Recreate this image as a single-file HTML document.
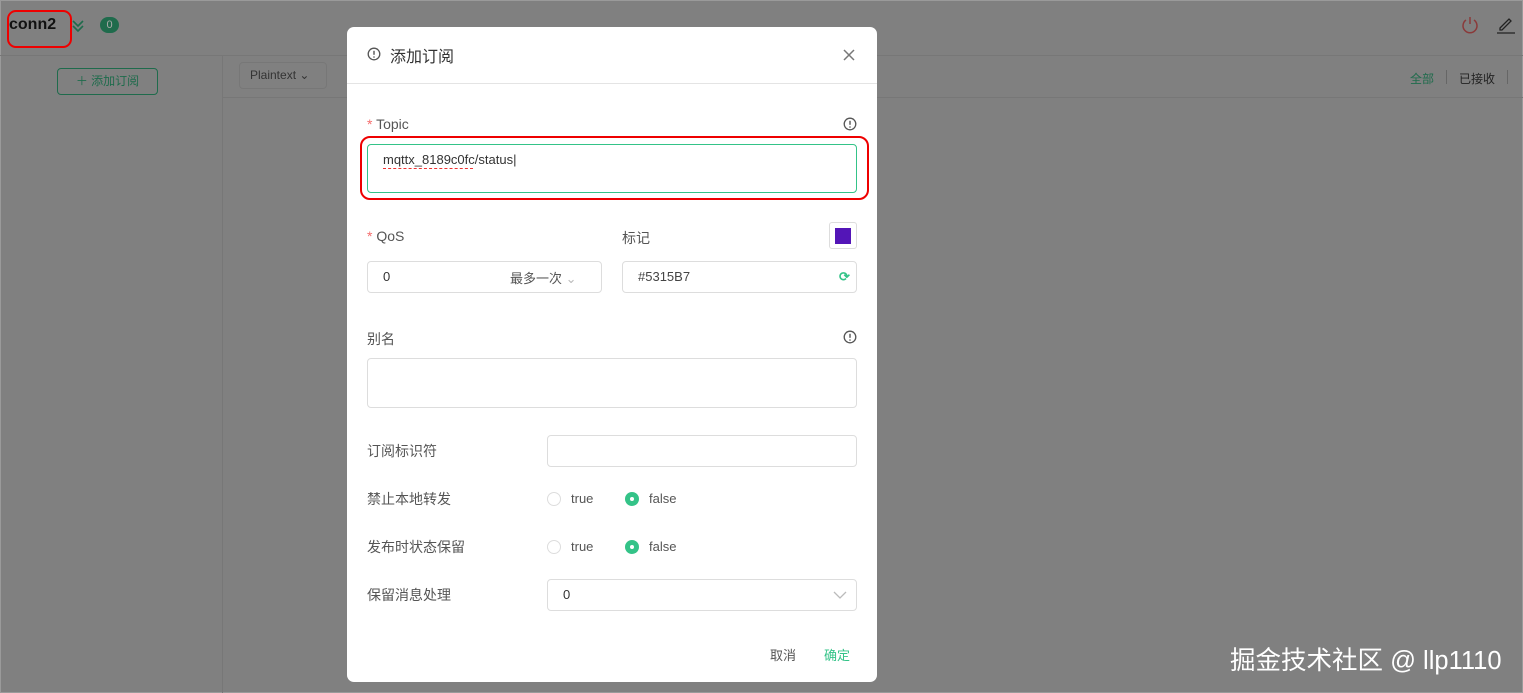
<!DOCTYPE html>
<html><head><meta charset="utf-8"><style>
*{margin:0;padding:0;box-sizing:border-box}
body{width:1523px;height:693px;background:#808080;position:relative;overflow:hidden;font-family:"Liberation Sans","Noto Sans CJK SC",sans-serif;color:#333}
.a{position:absolute}
.lbl{font-size:14px;color:#555}
.inp{position:absolute;background:#fff;border:1px solid #ddd;border-radius:4px}
.radio{position:absolute;width:14px;height:14px;border-radius:50%;border:1px solid #ddd;background:#fff}
.radio.on{border:none;background:#34c388}
.radio.on::after{content:"";position:absolute;left:5px;top:5px;width:4px;height:4px;border-radius:50%;background:#fff}
.rt{position:absolute;font-size:13px;color:#555}
</style></head><body>
<div class="a" style="left:0;top:0;width:1523px;height:693px;border:1px solid #9a9a9a"></div>
<div class="a" style="left:0;top:55px;width:1523px;height:1px;background:#777"></div>
<div class="a" style="left:222px;top:56px;width:1px;height:637px;background:#777"></div>
<div class="a" style="left:222px;top:97px;width:1301px;height:1px;background:#777"></div>
<div class="a" style="left:9px;top:16px;font-size:16px;font-weight:bold;color:#111">conn2</div>
<div class="a" style="left:7px;top:10px;width:65px;height:38px;border:2px solid #e00;border-radius:9px"></div>
<svg class="a" style="left:71px;top:19px" width="14" height="14"><path d="M2 2l5 5 5-5M2 7l5 5 5-5" stroke="#1f6b4c" stroke-width="1.6" fill="none"/></svg>
<div class="a" style="left:100px;top:17px;width:19px;height:16px;border-radius:8px;background:#1f6b4c;color:#aaa;font-size:11px;text-align:center;line-height:16px">0</div>
<div class="a" style="left:57px;top:68px;width:101px;height:27px;border:1px solid #1f6b4c;border-radius:4px;color:#1f6b4c;font-size:12px;line-height:25px;text-align:center">＋ 添加订阅</div>
<div class="a" style="left:239px;top:62px;width:88px;height:27px;border:1px solid #777;border-radius:4px;color:#333;font-size:12px;line-height:25px;padding-left:10px">Plaintext ⌄</div>
<svg class="a" style="left:1460px;top:15px" width="20" height="20"><path d="M6 5a7 7 0 1 0 8 0" stroke="#8a3a3a" stroke-width="1.5" fill="none"/><path d="M10 2v7" stroke="#8a3a3a" stroke-width="1.5"/></svg>
<svg class="a" style="left:1496px;top:14px" width="20" height="20"><path d="M4 14l9-9 2 2-9 9H4z" stroke="#222" stroke-width="1.3" fill="none"/><path d="M1 19h18" stroke="#222" stroke-width="1.3"/></svg>
<div class="a" style="left:1410px;top:70px;font-size:12px;color:#1f6b4c">全部</div>
<div class="a" style="left:1446px;top:70px;width:1px;height:14px;background:#666"></div>
<div class="a" style="left:1459px;top:70px;font-size:12px;color:#222">已接收</div>
<div class="a" style="left:1507px;top:70px;width:1px;height:14px;background:#666"></div>
<div class="a" style="left:1230px;top:640px;font-size:25.5px;color:#fff">掘金技术社区 @ llp1110</div>

<div class="a" style="left:347px;top:27px;width:530px;height:655px;background:#fff;border-radius:7px">
<svg class="a" style="left:20px;top:20px" width="14" height="14"><circle cx="7" cy="7" r="5.8" stroke="#555" stroke-width="1.3" fill="none"/><path d="M7 3.8v4" stroke="#555" stroke-width="1.4"/><circle cx="7" cy="10" r=".8" fill="#555"/></svg>
<div class="a" style="left:43px;top:16px;font-size:16px;color:#333">添加订阅</div>
<svg class="a" style="left:496px;top:22px" width="12" height="12"><path d="M1 1l10 10M11 1L1 11" stroke="#777" stroke-width="1.5"/></svg>
<div class="a" style="left:0;top:56px;width:530px;height:1px;background:#e4e4e4"></div>

<div class="a lbl" style="left:20px;top:89px"><span style="color:#f56c6c">*</span> Topic</div>
<svg class="a" style="left:496px;top:90px" width="14" height="14"><circle cx="7" cy="7" r="5.8" stroke="#555" stroke-width="1.3" fill="none"/><path d="M7 3.8v4" stroke="#555" stroke-width="1.4"/><circle cx="7" cy="10" r=".8" fill="#555"/></svg>
<div class="inp" style="left:20px;top:117px;width:490px;height:49px;border-color:#34c388"></div>
<div class="a" style="left:36px;top:125px;font-size:13px;color:#333">mqttx_8189c0fc/status|</div>
<div class="a" style="left:36px;top:140px;width:90px;height:2px;border-bottom:1px dashed #e33"></div>
<div class="a" style="left:13px;top:109px;width:509px;height:64px;border:2.5px solid #e00;border-radius:10px"></div>

<div class="a lbl" style="left:20px;top:201px"><span style="color:#f56c6c">*</span> QoS</div>
<div class="a lbl" style="left:275px;top:201px">标记</div>
<div class="a" style="left:482px;top:195px;width:28px;height:27px;border:1px solid #ddd;border-radius:3px"><div style="margin:5px;width:16px;height:16px;background:#5315B7"></div></div>
<div class="inp" style="left:20px;top:234px;width:235px;height:32px"></div>
<div class="a" style="left:36px;top:242px;font-size:13px">0</div>
<div class="a" style="left:163px;top:241px;font-size:13px;color:#555">最多一次 <span style="color:#bbb">⌄</span></div>
<div class="inp" style="left:275px;top:234px;width:235px;height:32px"></div>
<div class="a" style="left:291px;top:242px;font-size:13px;color:#444">#5315B7</div>
<div class="a" style="left:492px;top:242px;font-size:13px;color:#34c388;font-weight:bold">⟳</div>

<div class="a lbl" style="left:20px;top:302px">别名</div>
<svg class="a" style="left:496px;top:303px" width="14" height="14"><circle cx="7" cy="7" r="5.8" stroke="#555" stroke-width="1.3" fill="none"/><path d="M7 3.8v4" stroke="#555" stroke-width="1.4"/><circle cx="7" cy="10" r=".8" fill="#555"/></svg>
<div class="inp" style="left:20px;top:331px;width:490px;height:50px"></div>

<div class="a lbl" style="left:20px;top:414px">订阅标识符</div>
<div class="inp" style="left:200px;top:408px;width:310px;height:32px"></div>
<div class="a lbl" style="left:20px;top:462px">禁止本地转发</div>
<div class="radio" style="left:200px;top:465px"></div><div class="rt" style="left:224px;top:464px">true</div>
<div class="radio on" style="left:278px;top:465px"></div><div class="rt" style="left:302px;top:464px">false</div>
<div class="a lbl" style="left:20px;top:510px">发布时状态保留</div>
<div class="radio" style="left:200px;top:513px"></div><div class="rt" style="left:224px;top:512px">true</div>
<div class="radio on" style="left:278px;top:513px"></div><div class="rt" style="left:302px;top:512px">false</div>
<div class="a lbl" style="left:20px;top:558px">保留消息处理</div>
<div class="inp" style="left:200px;top:552px;width:310px;height:32px"></div>
<div class="a" style="left:216px;top:560px;font-size:13px">0</div>
<svg class="a" style="left:486px;top:563px" width="14" height="10"><path d="M1 2l6 6 6-6" stroke="#bbb" stroke-width="1.3" fill="none"/></svg>
<div class="a" style="left:423px;top:618px;font-size:13px;color:#555">取消</div>
<div class="a" style="left:477px;top:618px;font-size:13px;color:#34c388">确定</div>
</div>
</body></html>
